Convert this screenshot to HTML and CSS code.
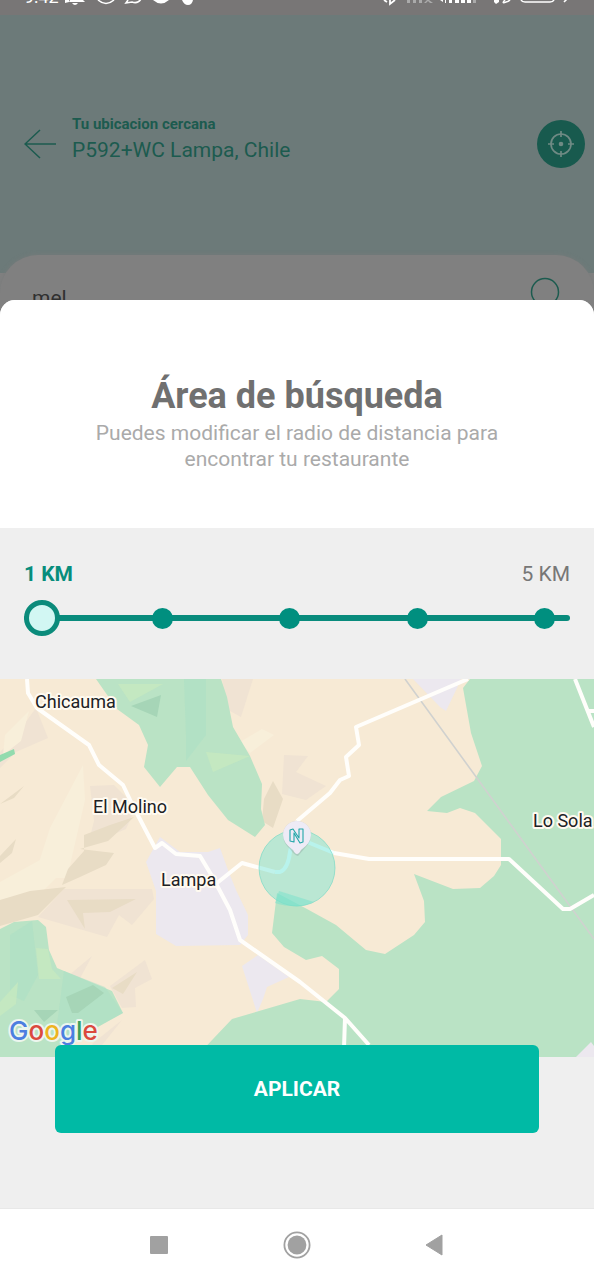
FILE: index.html
```html
<!DOCTYPE html>
<html lang="es">
<head>
<meta charset="utf-8">
<meta name="viewport" content="width=device-width, initial-scale=1">
<title>Área de búsqueda</title>
<link rel="stylesheet" href="styles.css">
</head>
<body>
<div class="app">
  <div class="backdrop">
    <div class="status">
      <div class="status-group">
        <span class="clock">9:42</span>
        <svg class="status-left" viewBox="64 0 134 16" aria-hidden="true">
          <path d="M65 0h4v2l-4 1zM70 0h13l2 2H69zM72 3h6q-3 4-6 0z" fill="#fff"/>
          <path d="M98 0q8 7 16 0M128 0l-2 3 6-1q6 2 9-3" fill="none" stroke="#fff" stroke-width="1.6"/>
          <path d="M153 0h16q-8 7-16 0zM182 0h11q-1 5-5 5t-6-5z" fill="#fff"/>
        </svg>
      </div>
      <svg class="status-right" viewBox="382 0 200 16" aria-hidden="true">
        <path d="M384 0l3 2M390 0v4l5-4" fill="none" stroke="#fff" stroke-width="1.8"/>
        <path d="M407 0h3v3h-3zM413 0h3v3h-3zM419 0h3v3h-3zM424 3l3-3h2l4 3h-3l-2-2-2 2z" fill="#aaa"/>
        <path d="M440 0h3v2zM445 0h1v3h-1zM449 0h3v3h-3zM455 0h4v3h-4zM461 0h4v3h-4zM467 0h4v3h-4zM494 0h5v2l-3 2-2-2z" fill="#fff"/>
        <path d="M473 0h3v3h-3z" fill="#aaa"/>
        <path d="M505 0q-4 4 1 2 4-1 4-3M521 0q1 2 4 2h25q3 0 4-2M564 2l3-3" fill="none" stroke="#fff" stroke-width="1.6"/>
      </svg>
    </div>
    <header class="header">
      <button class="icon-button" type="button" aria-label="Volver">
        <svg width="32" height="30" viewBox="0 0 32 30"><path d="M32 15H1M16 1L1 15l15 14" fill="none" stroke="#1c5b4f" stroke-width="1.5"/></svg>
      </button>
      <div class="place">
        <strong class="place-label">Tu ubicacion cercana</strong>
        <span class="place-name">P592+WC Lampa, Chile</span>
      </div>
      <button class="locate" type="button" aria-label="Usar mi ubicación">
        <svg width="26" height="26" viewBox="0 0 26 26"><g fill="none" stroke="#6f8a84" stroke-width="1.7"><circle cx="13" cy="13" r="10"/><path d="M13 0v6M13 20v6M0 13h6M20 13h6"/></g><circle cx="13" cy="13" r="2.3" fill="#6f8a84"/></svg>
      </button>
    </header>
    <div class="search-wrap">
      <div class="search">
        <input class="search-input" type="text" value="mel" aria-label="Buscar">
        <svg width="32" height="36" viewBox="0 0 32 36" aria-hidden="true"><path d="M24 25l7 9" stroke="#1c5b4f" stroke-width="1.5"/><circle cx="16" cy="15" r="13.5" fill="none" stroke="#1c5b4f" stroke-width="1.5"/></svg>
      </div>
    </div>
  </div>

  <main class="sheet">
    <div class="intro">
      <h1 class="title">Área de búsqueda</h1>
      <p class="subtitle">Puedes modificar el radio de distancia para encontrar tu restaurante</p>
    </div>

    <div class="distance">
      <div class="distance-labels">
        <label class="distance-min" for="radius">1 KM</label>
        <span>5 KM</span>
      </div>
      <div class="slider">
        <div class="track"></div>
        <div class="ticks"><i class="tick"></i><i class="tick"></i><i class="tick"></i><i class="tick"></i></div>
        <input class="range" id="radius" type="range" min="1" max="5" step="1" value="1">
      </div>
    </div>

    <svg class="map" viewBox="0 679 594 378" preserveAspectRatio="xMidYMid slice" role="img" aria-label="Mapa de Lampa">
      <rect y="679" width="594" height="378" fill="#f7ead5"/>
      <g fill="#f0e3d3">
        <path d="M36 708l12 30-32 14-16 16v-16l14-14z"/>
        <path d="M90 786l24-1 22 22-10 22-38 16 6-24z"/>
        <path d="M222 679h31l-12 38-13-7z"/>
        <path d="M284 755l24 1-12 16 30 14-20 14-24-6z"/>
        <path d="M38 917l26-28 88 0 2 10-22 26-13-10-12 22z"/>
        <path d="M110 986l35-26 7 19-17 9 1 19-14 1zM68 976l24-20-14 26zM92 1044l30-24-24 30z"/>
      </g>
      <g fill="#f8efda">
        <path d="M5 735l24-24-8 30-18 14zM83 765l2 35-18 78H34l16-50zM240 742l22-13 12 6-24 18zM0 882l40-22 24 10-20 20-44 10z"/>
      </g>
      <g fill="#e8dcc5">
        <path d="M110 825l24-8-26 24-28 8 34 4-8 12-26 12-18 8 6-16 16-18v-16zM0 856l16-17-4 14-12 10zM0 900l30-9 36-4-28 28-38 11zM67 900l69-1-26 13-27 1 2 16z"/>
        <path d="M273 781l10 18-10 29-11-7 2-22zM0 804l24-18-10 12zM112 988l25-16-14 22z"/>
      </g>
      <g fill="#ece8ef">
        <path d="M146 862l14-25 20 15h28l12-4 8 22 8 20 12 25v20l-8 10-64 1-20-12v-43z"/>
        <path d="M242 966l16-11 31 22-22 10-4 12-6 14z"/>
        <path d="M413 679h48l-4 9-11 23-6-4z"/>
      </g>
      <g fill="#bae3c5">
        <path d="M96 679h125l6 18 6 30 17 29 12 28-1 25 4 16-10 12-27-17-20-25-18-28h-13l-17 20-16-20 4-22-9-20-22-16z"/>
        <path d="M594 679H470l-7 9 8 45 11 33-8 15-33 16-14 14 20 2 13-5 15 5 26 26v26l-7 11-14 12-27 1-39-15 10 27 1 21-11 13-29 19-19-4-30-25-29-16-30-16-5 40 12 14 22 13 16-4 17 13v20l-13 13-26-3-68 20-37 39h399z"/>
        <path d="M0 929l14-7 24-2 8 7 3 23 8 18 55 23 11 22-43 24-24 20H0z"/>
      </g>
      <path d="M0 755l14-6 1 5-15 8z" fill="#92dbae"/>
      <path d="M184 679h22v56l-20 26V735zM10 935l22-14 6 54-14 26-14-6zM64 971l41 16 18 26-45 24-22-4z" fill="#aadfc5" opacity=".5"/>
      <g fill="#c7eabf" opacity=".75">
        <path d="M118 684h45l-33 18zM206 752l44 4-37 16zM36 948l12 1 4 20 9 10h-22zM0 1002l18-20-2 22-16 12z"/>
      </g>
      <path d="M131 706l30-11-4 22zM66 997l27-12 11 8-26 20h-6zM34 1010h24l-14 12z" fill="#a6d5b7"/>
      <path d="M576 1057l15-15 3 4v11z" fill="#ece8ef"/>
      <path d="M405 679l138 190 51 70" fill="none" stroke="#d0d1cf" stroke-width="1.6"/>
      <g fill="none" stroke="#fffefb" stroke-width="4" stroke-linejoin="round">
        <path d="M27 679l1 14 9 15 52 37 10 20 24 20 10 21 22 42 7-5 14 11 24 2 12 20 18 34 10 30 60 42 45 36 24 27M217 883l25-20 33 9M334 853l35 6h140l54 50h7l24-14M297 821l33-28 10-13 9-4-3-19 13-12-3-18 112-48M345 1018l-1 30M575 679l19 48M589 711h5"/>
        <path d="M275 872h5q8-3 10-20l7-31M300 839l34 14" stroke="#f3ffff"/>
      </g>
      <circle cx="297" cy="868" r="38" fill="#67e2d2" fill-opacity=".42" stroke="#72d8c5" stroke-opacity=".65"/>
      <path d="M275 903l4-12 35 11q-16 8-39 1z" fill="#7ce1cc" opacity=".55"/>
      <path d="M298 856q-4-1-8-7-7-6-7-14a14 14 0 0 1 28 0q0 7-6 13z" fill="#8a9b98" opacity=".35"/>
      <path d="M297 854q-2 0-4-4-10-7-10-15a14 14 0 0 1 28 0q0 8-10 15-2 4-4 4z" fill="#eeebf6"/>
      <path d="M290 841v-11l3-1 6 9v-9h4v13l-3 1-6-10v9z" fill="none" stroke="#22a6a8" stroke-width="1.1" stroke-linejoin="round"/>
      <g class="map-label">
        <text x="35" y="708">Chicauma</text>
        <text x="93" y="813">El Molino</text>
        <text x="161" y="886">Lampa</text>
        <text x="533" y="827">Lo Sola</text>
      </g>
      <text class="google" x="9" y="1040"><tspan fill="#4c7fe0">G</tspan><tspan fill="#db4a3e">o</tspan><tspan fill="#edb41f">o</tspan><tspan fill="#4c7fe0">g</tspan><tspan fill="#3aa05b">l</tspan><tspan fill="#db4a3e">e</tspan></text>
    </svg>

    <div class="actions">
      <button class="apply" type="button">APLICAR</button>
    </div>
  </main>

  <nav class="navbar" aria-label="Sistema">
    <button class="nav-button" type="button" aria-label="Recientes"><svg width="28" height="32" viewBox="0 0 28 32"><rect x="5" y="7" width="18" height="18" rx="1" fill="#a1a1a1"/></svg></button>
    <button class="nav-button" type="button" aria-label="Inicio"><svg width="28" height="32" viewBox="0 0 28 32"><circle cx="14" cy="16" r="12.6" fill="none" stroke="#a1a1a1" stroke-width="1.8"/><circle cx="14" cy="16" r="9.4" fill="#a1a1a1"/></svg></button>
    <button class="nav-button" type="button" aria-label="Atrás"><svg width="28" height="32" viewBox="0 0 28 32"><path d="M5 16L21 6v20z" fill="#a1a1a1" stroke="#a1a1a1" stroke-linejoin="round"/></svg></button>
  </nav>
</div>
</body>
</html>
```
FILE: styles.css
```css
* { box-sizing: border-box; }

body {
  margin: 0;
  background: #efefef;
  font-family: Roboto, "Noto Sans", sans-serif;
}

button {
  border: 0;
  padding: 0;
  background: none;
  font-family: inherit;
}

svg { display: block; }

.app {
  display: flex;
  flex-direction: column;
  min-height: 100vh;
}

.backdrop {
  height: 320px;
  overflow: hidden;
  background: #808080;
}

.status {
  display: flex;
  justify-content: space-between;
  height: 15px;
  padding: 0 12px 0 24px;
  background: #787676;
}

.status-group {
  display: flex;
  gap: 4px;
}

.clock {
  width: 36px;
  margin-top: -12px;
  color: #fff;
  font-size: 18px;
  line-height: 18px;
}

.status-left { width: 134px; height: 16px; }
.status-right { width: 200px; height: 16px; }

.header {
  display: flex;
  align-items: center;
  height: 258px;
  padding: 0 9px 0 24px;
  background: #6c7a79;
  color: #1c5b4f;
}

.icon-button { flex: none; }

.place {
  display: flex;
  flex: 1;
  flex-direction: column;
  margin-left: 16px;
  margin-bottom: 12px;
}

.place-label {
  font-size: 15px;
  line-height: 24px;
}

.place-name {
  font-size: 21px;
  line-height: 28px;
}

.locate {
  display: grid;
  place-items: center;
  width: 48px;
  height: 48px;
  border-radius: 50%;
  background: #185a4e;
}

.search-wrap { margin-top: -18px; }

.search {
  display: flex;
  justify-content: space-between;
  height: 90px;
  padding: 22px 33px 0 32px;
  border-radius: 38px 38px 0 0;
  background: #808080;
  box-shadow: 0 0 4px #777b7b;
}

.search-input {
  flex: 1;
  min-width: 0;
  height: 42px;
  padding: 0;
  border: 0;
  background: none;
  color: #303030;
  font: 21px/42px Roboto, sans-serif;
}

.sheet {
  position: relative;
  display: flex;
  flex: 1;
  flex-direction: column;
  margin-top: -20px;
  overflow: hidden;
  border-radius: 15px 15px 0 0;
  background: #efefef;
}

.intro {
  padding: 72px 72px 56px;
  background: #fff;
  text-align: center;
}

.title {
  margin: 0;
  color: #707070;
  font-size: 36px;
  font-weight: 700;
  line-height: 48px;
}

.subtitle {
  margin: 0;
  color: #aaa;
  font-size: 21px;
  line-height: 26px;
}

.distance { padding: 32px 24px 43px; }

.distance-labels {
  display: flex;
  justify-content: space-between;
  color: #777;
  font-size: 21px;
  line-height: 28px;
}

.distance-min {
  color: #078d7c;
  font-weight: 700;
}

.slider {
  display: grid;
  align-items: center;
  height: 36px;
  margin-top: 12px;
}

.track,
.ticks,
.range { grid-area: 1 / 1; }

.track {
  height: 6px;
  border-radius: 3px;
  background: #088b7c;
}

.ticks {
  display: grid;
  grid-template-columns: repeat(4, 1fr);
  place-items: center;
  margin: 0 -38px 0 75px;
}

.tick {
  width: 21px;
  height: 21px;
  border-radius: 50%;
  background: #008f7f;
}

.range {
  width: 100%;
  height: 36px;
  margin: 0;
  appearance: none;
  background: none;
}

.range::-webkit-slider-thumb {
  width: 36px;
  height: 36px;
  appearance: none;
  border: 5px solid #0b8b7b;
  border-radius: 50%;
  background: #d2f7f3;
}

.map {
  width: 100%;
  height: 378px;
}

.map-label {
  fill: #202124;
  stroke: #fffaf0;
  stroke-width: 4px;
  stroke-linejoin: round;
  paint-order: stroke;
  font-size: 18px;
}

.google {
  font-family: Inter, sans-serif;
  font-size: 26px;
  font-weight: 500;
  stroke: #edf6ee;
  stroke-width: 4px;
  stroke-linejoin: round;
  paint-order: stroke;
}

.actions {
  position: relative;
  margin-top: -12px;
  padding: 0 55px 75px;
}

.apply {
  width: 100%;
  height: 88px;
  border-radius: 6px;
  background: #00baa5;
  color: #fff;
  font-size: 21px;
  font-weight: 700;
}

.navbar {
  display: flex;
  align-items: center;
  justify-content: center;
  gap: 110px;
  height: 72px;
  border-top: 1px solid #e8e8e8;
  background: #fff;
}
```
